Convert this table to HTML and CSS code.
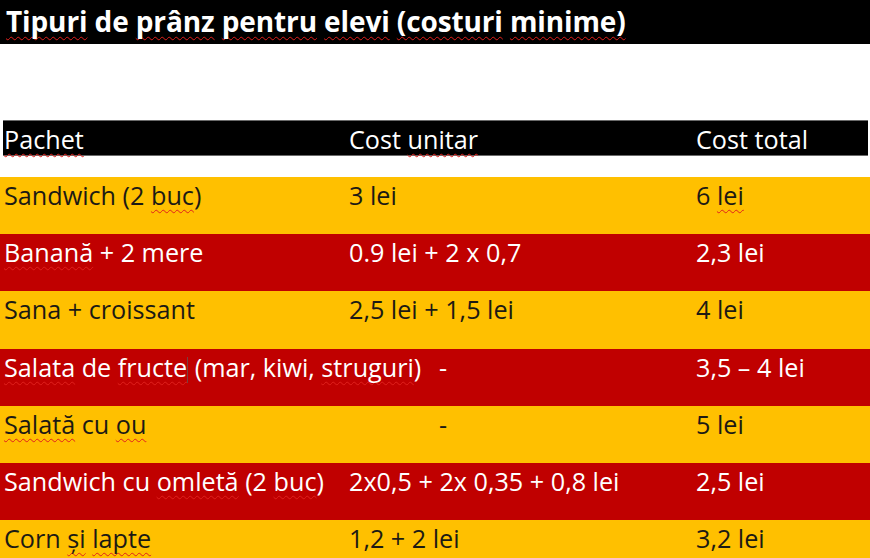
FILE: index.html
```html
<!DOCTYPE html>
<html lang="ro">
<head>
<meta charset="utf-8">
<title>Tipuri de prânz pentru elevi</title>
<link rel="stylesheet" href="styles.css">
</head>
<body>
<div class="title-bar"><h1 class="title"><span class="sp">Tipuri</span> de <span class="sp">prânz</span> <span class="sp">pentru</span> <span class="sp">elevi</span> <span class="sp">(costuri</span> <span class="sp">minime)</span></h1></div>
<div class="spacer"></div>
<div class="table">
  <div class="row head">
    <div class="cell"><span class="sp">Pachet</span></div>
    <div class="cell">Cost <span class="sp">unitar</span></div>
    <div class="cell">Cost total</div>
  </div>
  <div class="gap"></div>
  <div class="row yellow">
    <div class="cell">Sandwich (2 <span class="sp">buc</span>)</div>
    <div class="cell">3 lei</div>
    <div class="cell">6 <span class="sp sp-trail">lei</span></div>
  </div>
  <div class="row red">
    <div class="cell"><span class="sp">Banană</span> + 2 mere</div>
    <div class="cell">0.9 lei + 2 x 0,7</div>
    <div class="cell">2,3 lei</div>
  </div>
  <div class="row yellow">
    <div class="cell">Sana + croissant</div>
    <div class="cell">2,5 lei + 1,5 lei</div>
    <div class="cell">4 lei</div>
  </div>
  <div class="row red">
    <div class="cell"><span class="sp">Salata</span> de <span class="sp">fructe</span><span class="caret"></span> (mar, kiwi, <span class="sp">struguri</span>)</div>
    <div class="cell dash">-</div>
    <div class="cell">3,5 – 4 lei</div>
  </div>
  <div class="row yellow">
    <div class="cell"><span class="sp">Salată</span> cu <span class="sp">ou</span></div>
    <div class="cell dash">-</div>
    <div class="cell">5 lei</div>
  </div>
  <div class="row red">
    <div class="cell">Sandwich cu <span class="sp">omletă</span> (2 <span class="sp">buc</span>)</div>
    <div class="cell">2x0,5 + 2x 0,35 + 0,8 lei</div>
    <div class="cell">2,5 lei</div>
  </div>
  <div class="row yellow">
    <div class="cell">Corn <span class="sp">şi</span> <span class="sp">lapte</span></div>
    <div class="cell">1,2 + 2 lei</div>
    <div class="cell">3,2 lei</div>
  </div>
</div>
</body>
</html>
```

FILE: styles.css
```css
html, body {
  margin: 0;
  padding: 0;
  background: #ffffff;
  overflow: hidden;
}

body {
  width: 870px;
  height: 558px;
  font-family: "Open Sans", "Liberation Sans", sans-serif;
}

.title-bar {
  background: #000000;
  height: 44px;
  padding: 1px 0 0 6px;
  box-sizing: border-box;
}

.title {
  margin: 0;
  color: #ffffff;
  font-size: 28px;
  font-weight: 700;
  line-height: 40px;
  white-space: nowrap;
  letter-spacing: -0.12px;
}

.spacer {
  height: 76px;
}

.row {
  display: grid;
  grid-template-columns: 345px 347px 1fr;
  height: 57.2px;
  font-size: 25.2px;
  line-height: 34px;
  white-space: nowrap;
}

.row .cell {
  padding: 1px 0 0 4px;
  overflow: visible;
}

.row.head {
  background: #000000;
  color: #ffffff;
  height: 36px;
  margin: 0 2px 0 3px;
  grid-template-columns: 342px 347px 1fr;
  border-top: 1px solid #6a6a6a;
  border-bottom: 1px solid #6a6a6a;
  box-sizing: border-box;
}

.row.head .cell {
  padding: 1px 0 0 4px;
}

.row.head .cell:first-child {
  padding-left: 1px;
}

.gap {
  height: 21px;
}

.yellow {
  background: #ffc000;
  color: #1c1a14;
}

.red {
  background: #c00000;
  color: #ffffff;
}

.dash {
  padding-left: 94px !important;
}

.sp {
  text-decoration: underline wavy #e0201c;
  text-decoration-thickness: 1px;
  text-underline-offset: 4px;
  text-decoration-skip-ink: none;
}

.sp-trail {
  padding-right: 10px;
}

.caret {
  display: inline-block;
  width: 0;
  height: 26px;
  border-left: 1px solid #7a4040;
  vertical-align: -6px;
}
```
